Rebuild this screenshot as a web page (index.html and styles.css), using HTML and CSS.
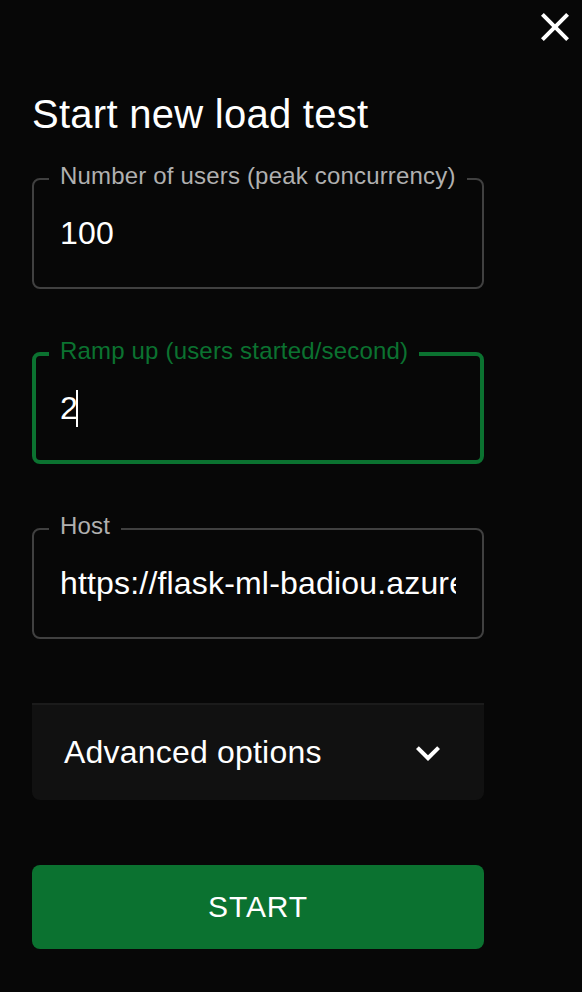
FILE: index.html
```html
<!DOCTYPE html>
<html lang="en">
<head>
<meta charset="utf-8">
<title>Start new load test</title>
<link rel="stylesheet" href="styles.css">
</head>
<body>
<div class="modal">
  <button class="close" aria-label="Close">
    <svg viewBox="0 0 24 24" width="48" height="48"><path d="M19 6.41 17.59 5 12 10.59 6.41 5 5 6.41 10.59 12 5 17.59 6.41 19 12 13.41 17.59 19 19 17.59 13.41 12z"/></svg>
  </button>
  <h2 class="title">Start new load test</h2>
  <form class="form">
    <div class="field">
      <span class="label">Number of users (peak concurrency)</span>
      <div class="value">100</div>
    </div>
    <div class="field focused">
      <span class="label">Ramp up (users started/second)</span>
      <div class="value">2<span class="caret"></span></div>
    </div>
    <div class="field">
      <span class="label">Host</span>
      <div class="value">https://flask-ml-badiou.azurewebsites.net</div>
    </div>
    <div class="accordion">
      <span class="acc-title">Advanced options</span>
      <svg class="chevron" viewBox="0 0 24 24" width="48" height="48"><path d="M16.59 8.59 12 13.17 7.41 8.59 6 10l6 6 6-6z"/></svg>
    </div>
    <button type="button" class="start">START</button>
  </form>
</div>
</body>
</html>
```

FILE: styles.css
```css
html, body {
  margin: 0;
  padding: 0;
  background: #070707;
}

body {
  font-family: "Liberation Sans", Arial, sans-serif;
  color: #ffffff;
}

.modal {
  position: relative;
  width: 582px;
  min-height: 992px;
  box-sizing: border-box;
  padding: 82px 0 0 32px;
}

.close {
  position: absolute;
  top: 3px;
  right: 3px;
  width: 48px;
  height: 48px;
  padding: 0;
  border: 0;
  background: transparent;
  display: flex;
}

.close svg {
  fill: #ffffff;
}

.title {
  margin: 0 0 32px 0;
  font-size: 40px;
  line-height: 64px;
  font-weight: 400;
  letter-spacing: 0.27px;
  color: #ffffff;
}

.form {
  width: 452px;
  display: flex;
  flex-direction: column;
  gap: 64px;
}

.field {
  position: relative;
  height: 111px;
  box-sizing: border-box;
  border: 2px solid #404040;
  border-radius: 8px;
  padding: 0 26px;
  display: flex;
  align-items: center;
}

.field.focused {
  height: 112px;
  margin-top: -1px;
  border: 4px solid #0b7230;
  padding: 0 24px;
}

.label {
  position: absolute;
  top: -16px;
  left: 15px;
  padding: 0 11px;
  background: #070707;
  font-size: 24px;
  line-height: 24px;
  letter-spacing: 0.18px;
  color: #b0b0b0;
  white-space: nowrap;
}

.field.focused .label {
  top: -17px;
  left: 13px;
  color: #0b7230;
}

.value {
  flex: 1;
  min-width: 0;
  overflow: hidden;
  white-space: nowrap;
  display: flex;
  align-items: center;
  font-size: 32px;
  line-height: 37px;
  letter-spacing: 0.18px;
  color: #ffffff;
}

.caret {
  display: inline-block;
  width: 2px;
  height: 37px;
  margin-left: -2px;
  background: #ffffff;
}

.accordion {
  height: 97px;
  box-sizing: border-box;
  border-top: 2px solid #1b1b1b;
  border-radius: 0 0 8px 8px;
  background: #111111;
  padding: 0 32px;
  display: flex;
  align-items: center;
  justify-content: space-between;
}

.acc-title {
  font-size: 32px;
  line-height: 37px;
  letter-spacing: 0.2px;
}

.chevron {
  fill: #ffffff;
}

.start {
  margin-top: 1px;
  height: 84px;
  border: 0;
  border-radius: 8px;
  background: #0b7230;
  color: #ffffff;
  font-family: "Liberation Sans", Arial, sans-serif;
  font-size: 30px;
  letter-spacing: 0.86px;
  font-weight: 400;
  padding: 0;
}
```
